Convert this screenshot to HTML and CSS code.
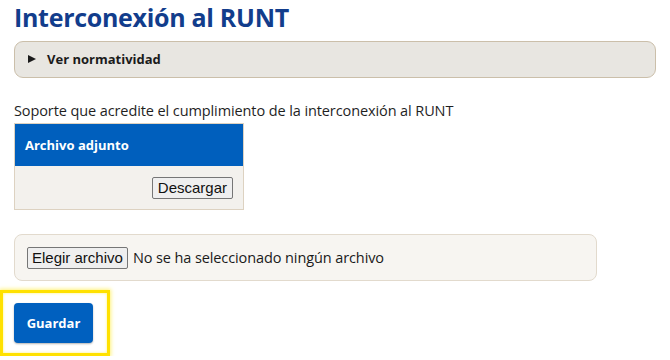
FILE: index.html
```html
<!DOCTYPE html>
<html>
	<head>
		<title>Interconexión al RUNT</title>
		<link rel="stylesheet" href="styles.css">
	</head>
	<body>
		<div class="page">
			<h1 class="title">Interconexión al RUNT</h1>

			<details class="norm">
				<summary><span class="arrow"></span>Ver normatividad</summary>
			</details>

			<p class="label">Soporte que acredite el cumplimiento de la interconexión al RUNT</p>

			<table class="attach">
				<tr><th>Archivo adjunto</th></tr>
				<tr><td><button class="plain-btn">Descargar</button></td></tr>
			</table>

			<div class="filebox">
				<button class="plain-btn choose">Elegir archivo</button>
				<span class="nofile">No se ha seleccionado ningún archivo</span>
			</div>

			<div class="mark">
				<button class="save">Guardar</button>
			</div>
		</div>
	</body>
</html>
```

FILE: styles.css
```css
body {
	margin: 0;
	font-family: "Open Sans", "Liberation Sans", Arial, sans-serif;
	background: #ffffff;
	color: #222;
}
.page {
	padding: 0 14px;
}
.title {
	margin: 0;
	padding-top: 2px;
	font-size: 25px;
	line-height: 30px;
	font-weight: 700;
	color: #123d8c;
	letter-spacing: -0.3px;
}
.norm {
	margin-top: 9px;
	box-sizing: border-box;
	height: 37px;
	background: #e8e6e1;
	border: 1.5px solid #cbbfaa;
	border-radius: 9px;
}
.norm summary {
	list-style: none;
	display: flex;
	align-items: center;
	height: 34px;
	padding-left: 13px;
	font-weight: 700;
	font-size: 13px;
	color: #1b1b1b;
}
.norm summary::-webkit-details-marker {
	display: none;
}
.arrow {
	width: 0;
	height: 0;
	border-left: 8px solid #1b1b1b;
	border-top: 4.5px solid transparent;
	border-bottom: 4.5px solid transparent;
	margin-right: 11px;
}
.label {
	margin: 24px 0 3px;
	font-size: 14.5px;
	line-height: 18px;
	color: #1f1f1f;
	letter-spacing: -0.1px;
}
.attach {
	width: 230px;
	border-collapse: collapse;
	border: 1px solid #ddd2c1;
}
.attach th {
	height: 42px;
	padding: 0 10px;
	background: #005fbd;
	color: #fff;
	text-align: left;
	font-size: 13px;
	font-weight: 700;
}
.attach td {
	height: 43px;
	padding: 0 10px 0 0;
	background: #f3f1ed;
	text-align: right;
}
.plain-btn {
	font-family: "Liberation Sans", Arial, sans-serif;
	font-size: 15px;
	color: #111;
	background: #efefef;
	border: 1px solid #767676;
	border-radius: 2px;
	padding: 1px 5px;
	line-height: 18px;
}
.filebox {
	margin-top: 24px;
	box-sizing: border-box;
	width: 583px;
	height: 47px;
	display: flex;
	align-items: center;
	padding-left: 12px;
	background: #f7f5f1;
	border: 1px solid #e2dacd;
	border-radius: 8px;
}
.choose {
	padding: 1px 4px;
}
.nofile {
	margin-left: 5px;
	font-size: 14.5px;
	color: #1a1a1a;
	letter-spacing: -0.1px;
}
.mark {
	box-sizing: border-box;
	margin: 9px 0 0 -14px;
	width: 110px;
	padding: 10px 11px;
	border: 3px solid #ffe100;
	box-shadow: 0 0 4px 1px #fff27a, inset 0 0 3px #fff27a;
}
.save {
	width: 79px;
	height: 40px;
	background: #0060bf;
	color: #fff;
	border: none;
	border-radius: 4px;
	font-family: "Open Sans", "Liberation Sans", sans-serif;
	font-size: 13px;
	font-weight: 700;
	box-shadow: 0 1px 2px rgba(0,0,0,0.3);
}
```
